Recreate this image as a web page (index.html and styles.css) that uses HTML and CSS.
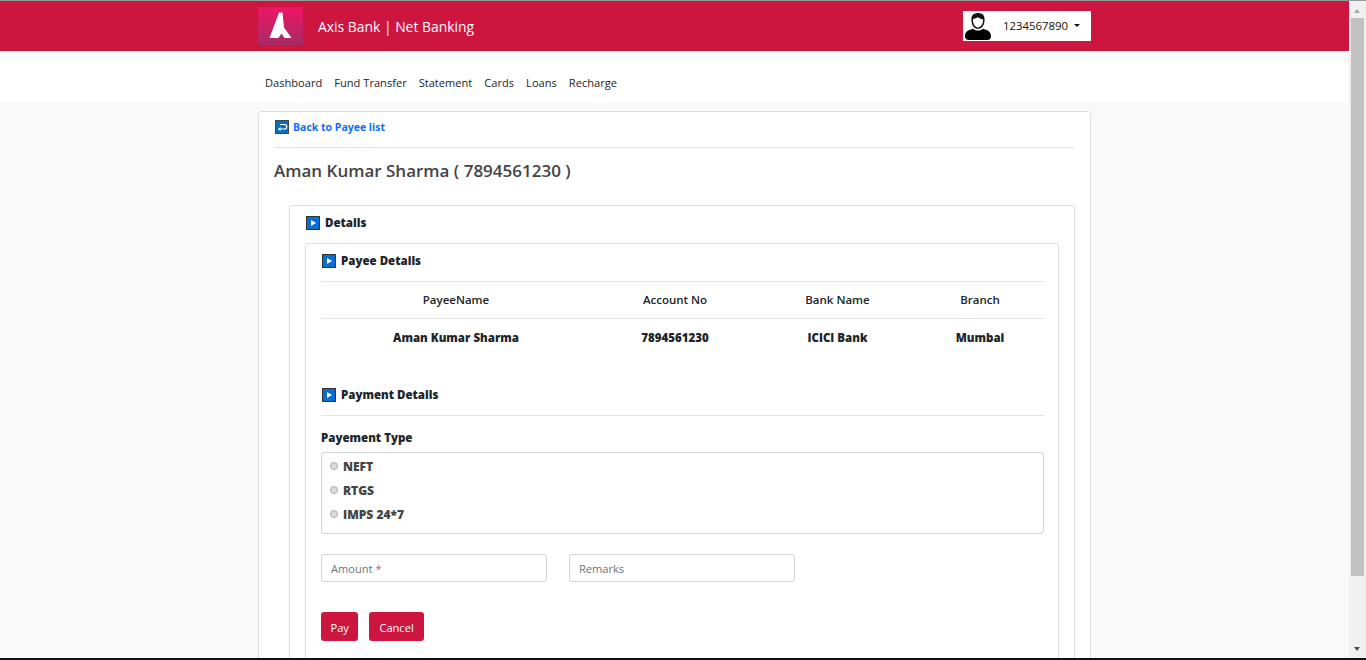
FILE: index.html
```html
<!DOCTYPE html>
<html lang="en">
<head>
  <meta charset="UTF-8">
  <title>Axis Bank | Net Banking</title>
  <link rel="stylesheet" href="styles.css">
</head>
<body>
<div class="window">
  <div class="page">
    <header class="topbar">
      <div class="wrap topbar-in">
        <div class="logo">
          <svg width="24" height="28" viewBox="0 0 24 28"><path d="M10 .5 L13.500 .5 L15 15.500 L22.500 26 L15.500 26 L12.500 21.500 L9.500 26 L.5 26 Z" fill="#fff"/></svg>
        </div>
        <div class="brand">Axis Bank | Net Banking</div>
        <div class="user">
          <svg class="avatar" width="26" height="27" viewBox="0 0 28 29">
            <path d="M14 0 C8 0 6.500 4 7 8 C7 13 10 17 14 17 C18 17 21 13 21 8 C21.500 4 20 0 14 0 Z" fill="#111"/>
            <path d="M14 4.500 C11 6 9 6 8.500 7 C8.500 12 11 15.500 14 15.500 C17 15.500 19.500 12 19.500 7 C18 6.500 16 6 14 4.500 Z" fill="#fff"/>
            <path d="M9 17 C10 19.500 18 19.500 19 17 C24 18 28 20 28 25 C28 28 26 29 24 29 L4 29 C2 29 0 28 0 25 C0 20 4 18 9 17 Z" fill="#000"/>
          </svg>
          <span class="user-no">1234567890</span>
          <span class="caret"></span>
        </div>
      </div>
    </header>

    <nav class="menu">
      <div class="wrap menu-in">
        <a href="#">Dashboard</a>
        <a href="#">Fund Transfer</a>
        <a href="#">Statement</a>
        <a href="#">Cards</a>
        <a href="#">Loans</a>
        <a href="#">Recharge</a>
      </div>
    </nav>

    <main class="wrap card outer">
      <a href="#" class="back">
        <svg class="ico" width="14" height="14" viewBox="0 0 14 14"><rect x=".5" y=".5" width="13" height="13" fill="#0a6ebd" stroke="#3a4a55"/><path d="M5 4.500 H9.500 A2 2 0 0 1 9.500 9 H3.500" fill="none" stroke="#fff" stroke-width="1.200"/><path d="M5.500 7 L3 9 L5.500 11 Z" fill="#fff"/></svg>
        Back to Payee list
      </a>
      <hr class="line first">
      <h2 class="payee-title">Aman Kumar Sharma ( 7894561230 )</h2>

      <section class="card mid">
        <h4 class="sec-title">
          <svg class="ico" width="14" height="14" viewBox="0 0 14 14"><rect x=".5" y=".5" width="13" height="13" fill="#0a6ed1" stroke="#333"/><path d="M5 4 L10 7 L5 10 Z" fill="#fff"/></svg>
          Details
        </h4>

        <section class="card inner">
          <h4 class="sec-title">
            <svg class="ico" width="14" height="14" viewBox="0 0 14 14"><rect x=".5" y=".5" width="13" height="13" fill="#0a6ed1" stroke="#333"/><path d="M5 4 L10 7 L5 10 Z" fill="#fff"/></svg>
            Payee Details
          </h4>
          <hr class="line">
          <table class="payee-table">
            <tr>
              <th class="c1">PayeeName</th>
              <th class="c2">Account No</th>
              <th class="c3">Bank Name</th>
              <th class="c4">Branch</th>
            </tr>
            <tr>
              <td>Aman Kumar Sharma</td>
              <td>7894561230</td>
              <td>ICICI Bank</td>
              <td>Mumbai</td>
            </tr>
          </table>

          <h4 class="sec-title pay-title">
            <svg class="ico" width="14" height="14" viewBox="0 0 14 14"><rect x=".5" y=".5" width="13" height="13" fill="#0a6ed1" stroke="#333"/><path d="M5 4 L10 7 L5 10 Z" fill="#fff"/></svg>
            Payment Details
          </h4>
          <hr class="line">

          <div class="type-label">Payement Type</div>
          <div class="type-box">
            <label class="radio"><span class="dot"></span>NEFT</label>
            <label class="radio"><span class="dot"></span>RTGS</label>
            <label class="radio"><span class="dot"></span>IMPS 24*7</label>
          </div>

          <div class="fields">
            <div class="field">Amount <span class="req">*</span></div>
            <div class="field">Remarks</div>
          </div>

          <div class="buttons">
            <button class="btn">Pay</button>
            <button class="btn">Cancel</button>
          </div>
        </section>
      </section>
    </main>
  </div>

  <div class="scrollbar">
    <span class="arrow up"></span>
    <span class="thumb"></span>
    <span class="arrow down"></span>
  </div>
</div>
<div class="frame-bottom"></div>
</body>
</html>
```

FILE: styles.css
```css
* {
  box-sizing: border-box;
}

html, body {
  margin: 0;
  height: 100%;
  overflow: hidden;
}

body {
  font-family: "Open Sans", "Noto Sans", sans-serif;
  font-size: 12px;
  color: #212529;
  background: #f9f9f9;
}

.window {
  display: flex;
  height: 660px;
  border-top: 1px solid #9a9a9a;
}

.page {
  width: 1349px;
  height: 659px;
  overflow: hidden;
}

.wrap {
  width: 833px;
  margin-left: 258px;
}

/* header */
.topbar {
  height: 50px;
  background: #cd163f;
}

.topbar-in {
  display: flex;
  align-items: flex-start;
  padding-top: 6px;
}

.logo {
  width: 45px;
  height: 38px;
  display: flex;
  align-items: center;
  justify-content: center;
  background: linear-gradient(#ef1565, #a62b63);
}

.brand {
  margin-left: 15px;
  margin-top: 10px;
  font-size: 13.900px;
  line-height: 20px;
  color: #fff;
}

.user {
  margin-left: auto;
  margin-top: 4px;
  width: 128px;
  height: 30px;
  background: #fff;
  display: flex;
  align-items: center;
  padding-left: 2px;
  color: #111;
}

.avatar {
  flex: none;
}

.user-no {
  margin-left: 12px;
  margin-top: -2px;
  font-size: 11.400px;
}

.caret {
  margin-left: 6px;
  margin-top: -2px;
  border-top: 3.500px solid #111;
  border-left: 3.500px solid transparent;
  border-right: 3.500px solid transparent;
}

/* menu */
.menu {
  margin-top: 10px;
  height: 42px;
  background: #fff;
}

.menu-in {
  display: flex;
  gap: 12px;
  padding: 14px 0 0 7px;
}

.menu a {
  font-size: 11.100px;
  line-height: 16px;
  color: #212529;
  text-decoration: none;
}

/* cards */
.card {
  background: #fff;
  border: 1px solid #ddd;
  border-radius: 3px;
}

.outer {
  margin-top: 8px;
  padding: 0 15px;
  height: 560px;
}

.back {
  display: flex;
  align-items: center;
  gap: 4px;
  height: 30px;
  padding-left: 1px;
  font-size: 10.500px;
  font-weight: 700;
  color: #0d6efd;
  text-decoration: none;
}

.ico {
  flex: none;
}

.line {
  margin: 0;
  border: 0;
  border-top: 1px solid #e4e4e4;
}

.first {
  margin-top: 5px;
}

.payee-title {
  margin: 11px 0 0;
  font-size: 17px;
  line-height: 24px;
  font-weight: 600;
  color: #444;
}

.mid {
  margin: 22px 0 0 15px;
  padding: 0 15px;
  height: 500px;
}

.sec-title {
  display: flex;
  align-items: center;
  gap: 5px;
  margin: 0;
  font-size: 11.500px;
  font-weight: 800;
  line-height: 16px;
  color: #212529;
}

.mid > .sec-title {
  padding: 9px 0 0 1px;
}

.inner {
  margin-top: 12px;
  padding: 0 14px 0 15px;
  height: 460px;
}

.inner > .sec-title:first-child {
  padding: 9px 0 0 1px;
}

.inner > .sec-title + .line {
  margin-top: 12px;
}

.pay-title {
  margin: 30px 0 0 1px;
}

.inner > .pay-title + .line {
  margin-top: 12px;
}

/* table */
.payee-table {
  width: 723px;
  border-collapse: collapse;
  table-layout: fixed;
}

.payee-table th,
.payee-table td {
  padding: 0;
  text-align: center;
  font-size: 11.500px;
}

.payee-table th {
  height: 36px;
  border-bottom: 1px solid #e4e4e4;
  font-weight: 600;
}

.payee-table td {
  height: 39px;
  font-weight: 800;
}

.c1 { width: 270px; }
.c2 { width: 168px; }
.c3 { width: 157px; }
.c4 { width: 128px; }

/* payment form */
.type-label {
  margin-top: 14px;
  font-size: 11.500px;
  font-weight: 800;
  line-height: 16px;
}

.type-box {
  margin-top: 6px;
  height: 82px;
  padding: 1px 8px;
  border: 1px solid #ced4da;
  border-radius: 3px;
}

.radio {
  display: flex;
  align-items: center;
  height: 24px;
  font-size: 12px;
  font-weight: 800;
  color: #444;
}

.dot {
  width: 8px;
  height: 8px;
  margin-right: 5px;
  border: 1px solid #aaa;
  border-radius: 50%;
  background: #ddd;
}

.fields {
  display: flex;
  gap: 22px;
  margin-top: 20px;
}

.field {
  width: 226px;
  height: 28px;
  padding: 1px 9px 0;
  border: 1px solid #ced4da;
  border-radius: 3px;
  font-size: 11.100px;
  line-height: 26px;
  color: #6c757d;
}

.req {
  color: #b5656f;
}

.buttons {
  display: flex;
  gap: 11px;
  margin-top: 30px;
}

.btn {
  height: 29px;
  padding: 1px 10px 0;
  border: 0;
  border-radius: 3px;
  background: #cd163f;
  color: #fff;
  font-family: inherit;
  font-size: 11.100px;
}

.btn:first-child {
  padding: 1px 9.500px 0;
}

/* window chrome */
.scrollbar {
  width: 17px;
  height: 657px;
  position: relative;
  background: #f1f1f1;
}

.thumb {
  position: absolute;
  left: 2px;
  top: 17px;
  width: 13px;
  height: 558px;
  background: #c1c1c1;
}

.arrow {
  position: absolute;
  left: 5px;
  border-left: 3.500px solid transparent;
  border-right: 3.500px solid transparent;
}

.up {
  top: 8px;
  border-bottom: 4px solid #a5a5a5;
}

.down {
  top: 646px;
  border-top: 4px solid #505050;
}

.frame-bottom {
  position: fixed;
  left: 0;
  right: 0;
  bottom: 0;
  height: 2px;
  background: #111;
}
```
